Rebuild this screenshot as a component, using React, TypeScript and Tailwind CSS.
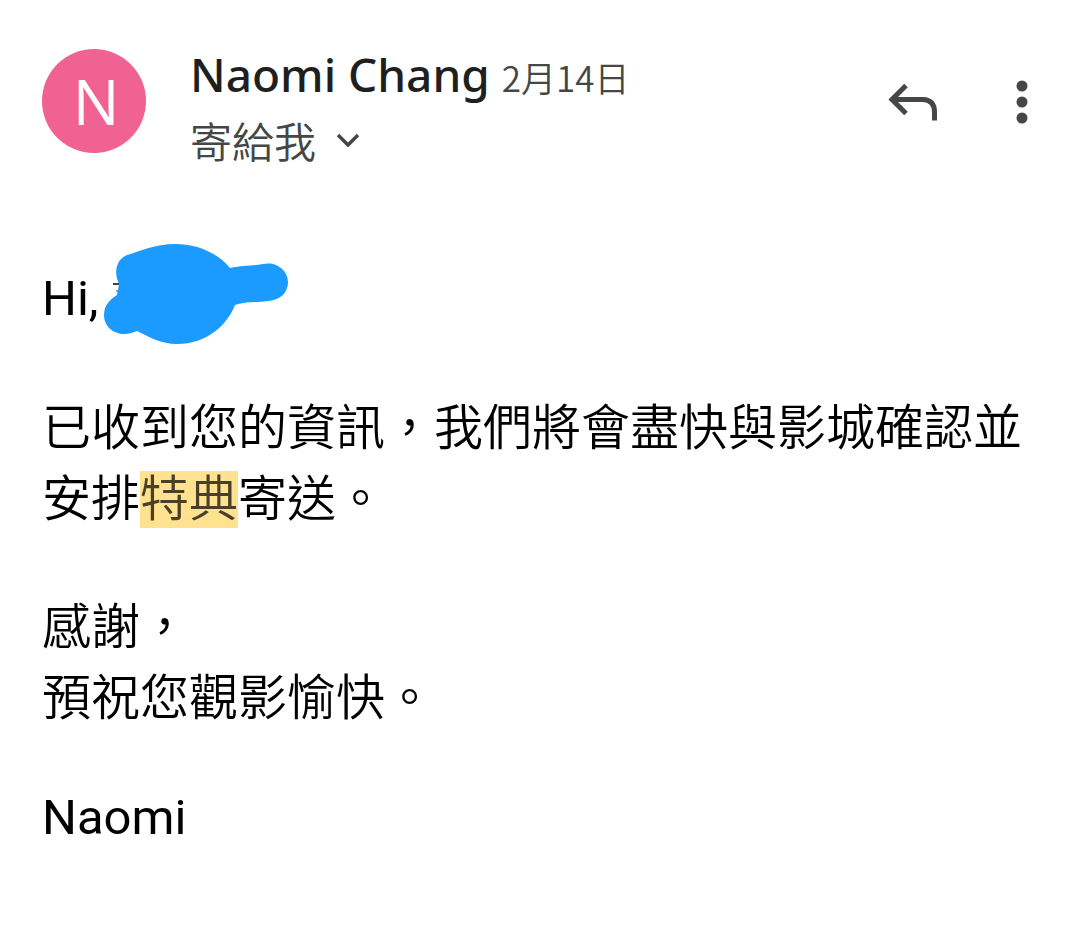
function Avatar() {
  return (
    <div className="mt-px flex size-[104px] shrink-0 items-center justify-center rounded-full bg-[#f06292] pl-1 font-['Open_Sans',sans-serif] text-[62px] leading-none text-white">
      N
    </div>
  );
}

function ReplyIcon() {
  return (
    <svg viewBox="0 0 50 40" className="h-10 w-[50px]" fill="none" stroke="#444746" strokeWidth="5" aria-hidden="true">
      <path d="M18 3.500 4 17.500 18 31.500M4 17.500H35Q46.500 18 46.500 30V38.500" />
    </svg>
  );
}

function MoreIcon() {
  return (
    <svg viewBox="0 0 12 44" className="h-11 w-3" fill="#444746" aria-hidden="true">
      <circle cx="6" cy="6" r="5.500" />
      <circle cx="6" cy="22" r="5.500" />
      <circle cx="6" cy="38" r="5.500" />
    </svg>
  );
}

function Scribble() {
  return (
    <svg viewBox="0 0 186 102" className="mb-2 h-[102px] w-[186px]" aria-hidden="true">
      <path d="M10 41H20" stroke="#000" strokeWidth="1.500" />
      <path d="M13 48H20" stroke="#444" strokeWidth="1" />
      <path
        fill="#1b9aff"
        d="M24 12C38 8 52 1 72 1C94 1 115 10 127 25C140 22 150 23 160 21C173 18 185 27 185 39C185 49 178 57 165 58C152 60 145 58 132 62C124 82 104 101 74 101C58 101 46 94 34 88C17 96 1 87 1 72C1 61 8 56 14 52L16 41C10 28 14 16 24 12Z"
      />
    </svg>
  );
}

export default function App() {
  return (
    <main className="min-h-screen bg-white pt-12 pr-[42px] pb-12 pl-[42px] font-[Roboto,'Noto_Sans_CJK_TC',sans-serif] text-black">
      <header className="flex items-start">
        <Avatar />
        <div className="ml-11 min-w-0 flex-1">
          <div className="flex h-[54px] items-baseline gap-3">
            <h1 className="font-['Noto_Sans',sans-serif] text-[46px] leading-[52px] font-medium text-[#1f1f1f]">
              Naomi Chang
            </h1>
            <time className="font-['Noto_Sans_CJK_TC',sans-serif] text-[35px] leading-[52px] font-[350] text-[#444746]">
              2月14日
            </time>
          </div>
          <button
            type="button"
            className="mt-[10px] flex items-center gap-5 font-['Noto_Sans_CJK_TC',sans-serif] text-[42px] leading-[56px] font-[350] text-[#444746]"
          >
            寄給我
            <svg viewBox="0 0 24 14" className="h-[14px] w-6" fill="none" stroke="#444746" strokeWidth="3.500" aria-hidden="true">
              <path d="M2 2 12 12 22 2" />
            </svg>
          </button>
        </div>
        <div className="flex h-[108px] items-center gap-[78px]">
          <button type="button" aria-label="回覆">
            <ReplyIcon />
          </button>
          <button type="button" aria-label="更多選項" className="mr-[10px]">
            <MoreIcon />
          </button>
        </div>
      </header>

      <article className="mt-[75px] text-[49px] leading-[71px]">
        <div className="flex items-center gap-1">
          <p>Hi,</p>
          <Scribble />
        </div>
        <p className="-mr-4 mt-10 font-[350]">
          已收到您的資訊，我們將會盡快與影城確認並
          <br />
          安排<mark className="bg-[#ffe290] text-[#4a4028]">特典</mark>寄送。
        </p>
        <p className="mt-[57px] font-[350]">
          感謝，
          <br />
          預祝您觀影愉快。
        </p>
        <p className="mt-12">Naomi</p>
      </article>
    </main>
  );
}
